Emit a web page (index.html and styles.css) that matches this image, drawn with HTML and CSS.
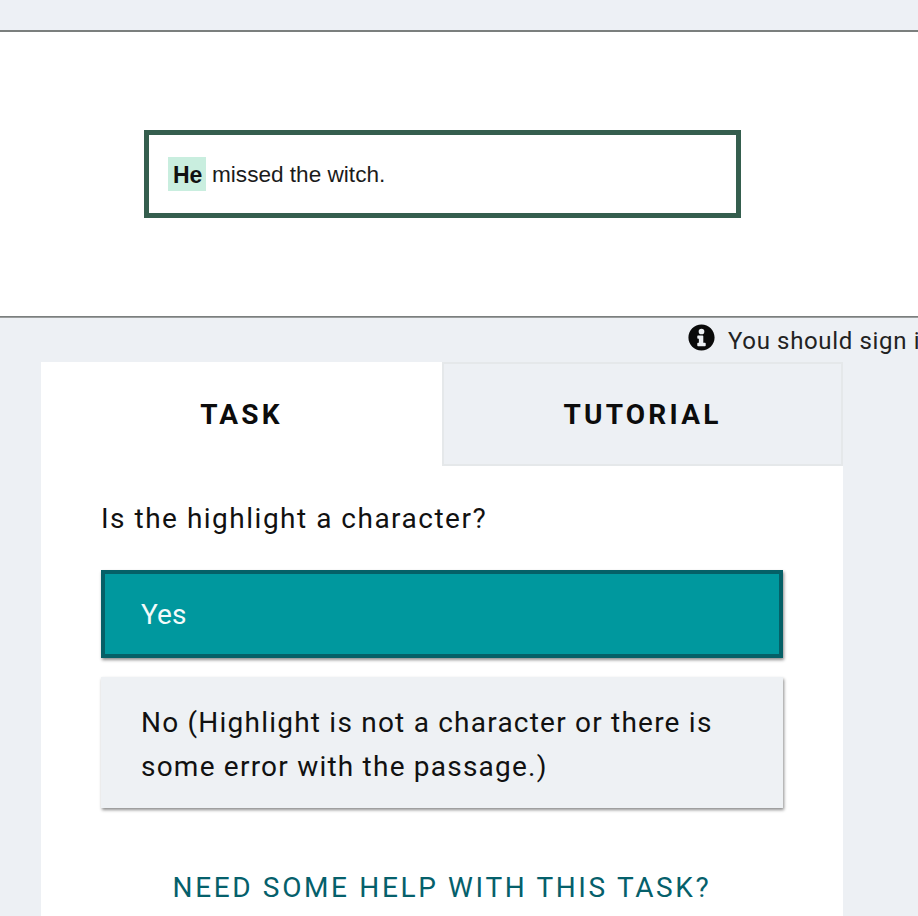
FILE: index.html
```html
<!DOCTYPE html>
<html lang="en">
<head>
<meta charset="utf-8">
<title>Task</title>
<link rel="stylesheet" href="styles.css">
</head>
<body>
<div class="page">
  <div class="topbar"></div>
  <section class="stage">
    <div class="passage"><mark class="hl">He</mark><span class="rest">missed the witch.</span></div>
  </section>
  <div class="notice">
    <svg class="info" viewBox="0 0 512 512" aria-hidden="true"><path fill-rule="evenodd" d="M256 8C119 8 8 119 8 256s111 248 248 248 248-111 248-248S393 8 256 8zm0 80a54 54 0 1 1 0 108 54 54 0 0 1 0-108zm80 318c0 8-6 14-14 14H190c-8 0-14-6-14-14v-36c0-8 6-14 14-14h16v-76h-16c-8 0-14-6-14-14v-36c0-8 6-14 14-14h86c8 0 14 6 14 14v126h32c8 0 14 6 14 14v36z"/></svg>
    <span class="notice-text">You should sign in to track your progress.</span>
  </div>
  <main class="card">
    <div class="tabs">
      <div class="tab tab-active">TASK</div>
      <div class="tab tab-idle">TUTORIAL</div>
    </div>
    <div class="body">
      <p class="question">Is the highlight a character?</p>
      <div class="option option-on">Yes</div>
      <div class="option option-off">No (Highlight is not a character or there is some error with the passage.)</div>
      <div class="help">NEED SOME HELP WITH THIS TASK?</div>
    </div>
  </main>
</div>
</body>
</html>
```
FILE: styles.css
```css
* { box-sizing: border-box; }
html, body { margin: 0; padding: 0; height: 916px; overflow: hidden; }
body { background: #edf0f4; color: #111; font-family: Roboto, sans-serif; }
.page { width: 918px; height: 916px; overflow: hidden; }
.topbar { height: 32px; background: #edf0f5; border-bottom: 2px solid #7b7f7e; }
.stage { height: 285px; background: #fff; border-bottom: 1px solid #7b7f7e; padding: 98px 0 0 144px; box-shadow: 0 1px 0 #9a9d9d; }
.passage { width: 597px; height: 88px; border: 5px solid #355e4e; display: flex; align-items: center; gap: 6px; padding-left: 19px; font-family: "Liberation Sans", Arial, sans-serif; font-size: 23px; color: #1b1b1b; }
.hl { background: #c9eedf; color: #111; font-weight: 700; padding: 0 5px; height: 34px; line-height: 36px; width: 38px; }
.rest { font-size: 22.6px; padding-top: 2px; }
.notice { display: flex; align-items: center; gap: 13px; height: 45px; padding-left: 688px; white-space: nowrap; font-size: 24px; letter-spacing: 0.65px; color: #222; }
.notice-text { padding-top: 2px; }
.info { flex: none; width: 27px; height: 27px; fill: #0a0a0a; margin-top: -4px; }
.card { width: 802px; margin-left: 41px; background: #fff; height: 560px; }
.tabs { display: flex; height: 104px; }
.tab { flex: 1; display: flex; align-items: center; justify-content: center; font-size: 28px; font-weight: 700; letter-spacing: 3.2px; color: #0c0c0c; }
.tab-active { flex: 0 0 401px; }
.tab-idle { background: #edf0f4; border: 2px solid #e5e8ea; }
.body { padding: 31px 60px 0; }
.question { margin: 0 0 29px; font-size: 28px; line-height: 44px; letter-spacing: 1.5px; color: #111; }
.option { font-size: 28px; line-height: 44px; letter-spacing: 1.25px; box-shadow: 1px 2px 3px rgba(0,0,0,.45); }
.option-on { background: #00989e; border: 4px solid #056067; color: #f4fbfb; height: 88px; padding: 19px 36px 17px; margin-bottom: 19px; width: 682px; letter-spacing: 0.15px; }
.option-off { background: #eef1f4; color: #111; padding: 24px 40px 19px; width: 682px; letter-spacing: 1.22px; }
.help { margin-top: 58px; text-align: center; font-size: 28px; line-height: 44px; letter-spacing: 2.64px; color: #05606b; }
```
